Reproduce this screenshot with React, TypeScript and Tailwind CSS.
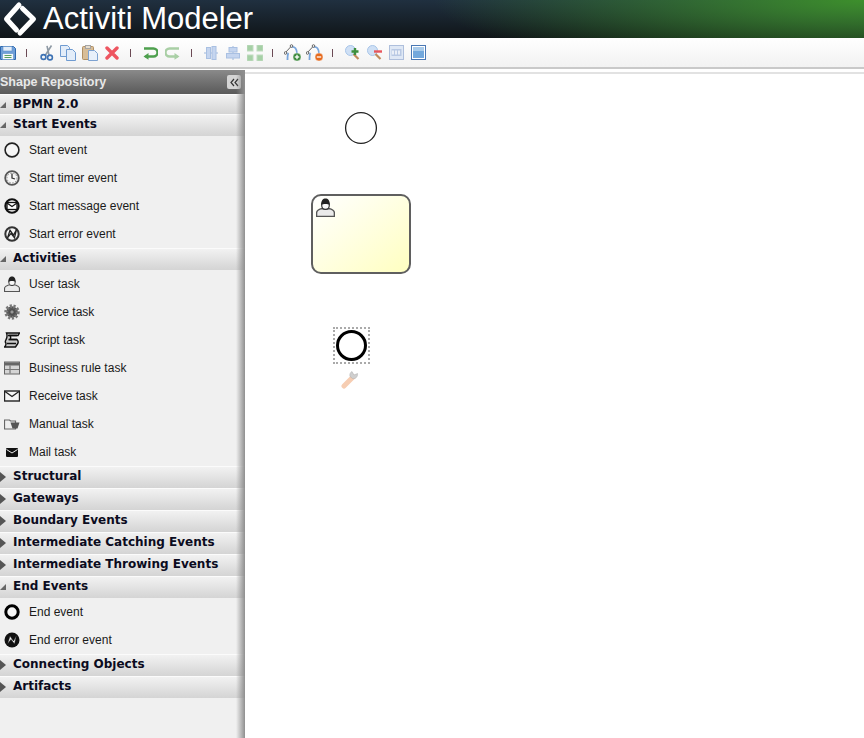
import * as React from "react";

type Icon = () => React.ReactElement;

const Svg = ({ size = 20, box = 20, children }: { size?: number; box?: number; children: React.ReactNode }) => (
  <svg width={size} height={size} viewBox={`0 0 ${box} ${box}`} fill="none" className="block shrink-0">
    {children}
  </svg>
);

// Toolbar icons
const SaveIcon: Icon = () => (
  <Svg size={16} box={16}>
    <path d="M.5 1.500h13l2 2v11H.5z" fill="#6f9fd8" stroke="#2d68ae" />
    <rect x="3" y="1.500" width="9" height="4.500" fill="#e4eef9" stroke="#5e8fc8" strokeWidth=".6" />
    <rect x="2.500" y="8.500" width="11" height="6" fill="#f4f8fb" stroke="#5e8fc8" strokeWidth=".6" />
    <path d="M4.500 10.500h7M4.500 12.500h7" stroke="#58a05c" strokeWidth="1.200" />
  </Svg>
);
const CutIcon: Icon = () => (
  <Svg size={16} box={16}>
    <path d="M11.500.5 5.500 10M7 .8 9 10" stroke="#8f9aa5" strokeWidth="1.600" />
    <circle cx="3.500" cy="12" r="2.400" stroke="#3d72b4" strokeWidth="1.600" />
    <circle cx="10" cy="12.500" r="2.400" stroke="#3d72b4" strokeWidth="1.600" />
  </Svg>
);
const CopyIcon: Icon = () => (
  <Svg size={16} box={16}>
    <path d="M.5.5h7l2 2v9H.5z" fill="#e3edf9" stroke="#6f9bd1" />
    <path d="M6.500 4.500h6l3 3v8h-9z" fill="#e3edf9" stroke="#6f9bd1" />
  </Svg>
);
const PasteIcon: Icon = () => (
  <Svg size={16} box={16}>
    <rect x=".5" y="1.500" width="11" height="13" rx="1" fill="#d8bd97" stroke="#b08f63" />
    <rect x="3.500" y=".5" width="5" height="3" fill="#e7ddcd" stroke="#a5a5a5" />
    <path d="M6.500 5.500h6l3 3v7h-9z" fill="#e8f0fa" stroke="#7da2d1" />
  </Svg>
);
const DeleteIcon: Icon = () => (
  <Svg size={14} box={14}>
    <path d="M2 2 12 12M12 2 2 12" stroke="#ee5560" strokeWidth="3.400" strokeLinecap="round" />
  </Svg>
);
const UndoIcon = ({ light = false }: { light?: boolean }) => {
  const c = light ? "#a9cfa5" : "#4ea04e";
  return (
    <Svg size={15} box={15}>
      <g transform={light ? "matrix(-1 0 0 1 15 0)" : undefined}>
        <path d="M1 3.500h9.500a3.500 3.500 0 0 1 0 8H2.500" stroke={c} strokeWidth="2.400" />
        <path d="M5.500 8 .5 11.500l5 3.300z" fill={c} />
      </g>
    </Svg>
  );
};
const AlignV: Icon = () => (
  <Svg size={14} box={14}>
    <path d="M0 7h14" stroke="#9cb6dc" />
    <rect x="2.500" y="1.500" width="4" height="11" fill="#c5d5ef" stroke="#a9c0e2" />
    <rect x="8" y=".5" width="4" height="13" fill="#c5d5ef" stroke="#a9c0e2" />
  </Svg>
);
const AlignH: Icon = () => (
  <Svg size={14} box={14}>
    <path d="M7 0v14" stroke="#9cb6dc" />
    <rect x="3" y="1.500" width="8" height="4.500" fill="#c5d5ef" stroke="#a9c0e2" />
    <rect x=".5" y="7.500" width="13" height="4.500" fill="#c5d5ef" stroke="#a9c0e2" />
  </Svg>
);
const Group: Icon = () => (
  <Svg size={16} box={16}>
    {[
      [0, 0],
      [10, 0],
      [0, 10],
      [10, 10],
    ].map(([x, y]) => (
      <rect key={`${x}-${y}`} x={x} y={y} width="6" height="6" fill="#a6d0a6" stroke="#c0dcc0" />
    ))}
  </Svg>
);
const DockerIcon = ({ color, plus }: { color: string; plus?: boolean }) => (
  <Svg size={18} box={18}>
    <path d="M1 9 7.500 2" stroke="#666" />
    <path d="M7 3c4-1 6 2 6 7M4.500 9c-1 1-1 4-1 7" stroke="#7aa6dc" strokeWidth="1.800" />
    <circle cx="1.500" cy="9" r="1.300" fill="#fff" stroke="#666" />
    <circle cx="7.500" cy="2" r="1.300" fill="#fff" stroke="#666" />
    <circle cx="13" cy="13" r="4" fill={color} stroke="#fff" strokeWidth=".4" />
    <path d="M10.800 13h4.400" stroke="#fff" strokeWidth="1.300" />
    {plus && <path d="M13 10.800v4.400" stroke="#fff" strokeWidth="1.300" />}
  </Svg>
);
const ZoomIcon = ({ plus }: { plus: boolean }) => (
  <Svg size={15} box={15}>
    <circle cx="5.500" cy="5.500" r="5" fill="#cfe0f5" stroke="#a8c5e8" />
    <path d="m8.500 9 5 5" stroke="#c08a5b" strokeWidth="2.200" />
    {plus ? (
      <path d="M10 3v7M6.500 6.500h7" stroke="#3d8f3d" strokeWidth="2.400" />
    ) : (
      <path d="M7 6.500h8" stroke="#e8555c" strokeWidth="2.400" />
    )}
  </Svg>
);
const Zoom100: Icon = () => (
  <Svg size={15} box={15}>
    <rect x=".5" y=".5" width="14" height="14" fill="#dfe8f5" stroke="#aebfdc" />
    <rect x="2.500" y="4" width="10" height="7" fill="#b9c9e4" />
    <path d="M4 5.500v4M7 5.500v4M10 5.500v4" stroke="#fff" strokeWidth="1.400" />
  </Svg>
);
const ZoomFit: Icon = () => (
  <Svg size={15} box={15}>
    <rect x=".5" y=".5" width="14" height="14" fill="#fff" stroke="#4a78b4" />
    <rect x="2" y="2" width="11" height="11" fill="#73a8dc" />
    <rect x="2" y="2" width="11" height="4" fill="#a9cbea" />
  </Svg>
);
const Sep = () => <div className="h-[8px] w-px bg-[#6b4a55]" />;

// Repository icons
const Ring = ({ w = 1.2, stroke = "#222", children }: { w?: number; stroke?: string; children?: React.ReactNode }) => (
  <Svg size={16} box={16}>
    <circle cx="8" cy="8" r={8 - w / 2 - 0.3} fill="#f6f6f6" stroke={stroke} strokeWidth={w} />
    {children}
  </Svg>
);
const StartEvent: Icon = () => <Ring w={1.6} />;
const TimerEvent: Icon = () => (
  <Ring w={1.800} stroke="#555">
    <circle cx="8" cy="8" r="5" stroke="#888" strokeDasharray="1.500 1.500" />
    <path d="M8 3.500V8l3 1" stroke="#333" strokeWidth="1.300" />
  </Ring>
);
const MessageEvent: Icon = () => (
  <Ring w={2} stroke="#111">
    <rect x="3" y="4.500" width="10" height="7" fill="#fff" stroke="#111" strokeWidth="1.300" />
    <path d="m3 5 5 3.500L13 5" stroke="#111" strokeWidth="1.200" />
  </Ring>
);
const ErrorEvent: Icon = () => (
  <Ring w={2} stroke="#333">
    <path d="M3.500 12 6 4l3.500 5L12.500 3.500 10.500 12 7 7.500z" fill="#bbb" stroke="#222" strokeWidth="1.200" />
  </Ring>
);
const UserIcon = ({ size = 16 }: { size?: number }) => (
  <Svg size={size} box={16}>
    <path d="M.5 15.500v-3c0-2 2.500-3 4-3.500h7c1.500.5 4 1.500 4 3.500v3z" fill="#eaeaea" stroke="#555" strokeWidth="1.200" />
    <path d="M4.800 6a3.200 3.400 0 1 1 6.400 0c0 1.800-1 3.500-3.200 3.500S4.800 7.800 4.800 6z" fill="#f8f8f8" stroke="#333" />
    <path d="M4.400 6C4.200 2 6 .5 8 .5s3.800 1.500 3.600 5.500C10 4.800 6 4.800 4.400 6z" fill="#222" />
  </Svg>
);
const ServiceIcon: Icon = () => (
  <Svg size={16} box={16}>
    <circle cx="8" cy="8" r="5.800" fill="#555" stroke="#777" strokeWidth="3.800" strokeDasharray="2 1.500" />
    <circle cx="8" cy="8" r="2.200" fill="#999" stroke="#444" />
  </Svg>
);
const ScriptIcon: Icon = () => (
  <Svg size={16} box={16}>
    <path
      d="M2.500 1h13l-1.500 2.500H6c1 1.500 1 2.500 0 4h7c1.500 1.500 1.500 3 .5 4.500l-2 3H.5c1.500-1.500 2.200-3 .8-5C1 7.500 4.500 6.500 2.500 1z"
      fill="#ccc"
      stroke="#111"
      strokeWidth="1.400"
    />
    <path d="M4 3.500h9M4.500 7.500h8.500M3 11.500h9" stroke="#111" strokeWidth="1.400" />
  </Svg>
);
const BusinessIcon: Icon = () => (
  <Svg size={16} box={16}>
    <rect x=".5" y="2" width="15" height="12" fill="#d5d5d5" stroke="#666" />
    <rect x="1" y="2.500" width="14" height="3" fill="#666" />
    <path d="M1 9.500h14M6 5.500v8" stroke="#777" strokeWidth="1.200" />
  </Svg>
);
const ReceiveIcon: Icon = () => (
  <Svg size={16} box={16}>
    <rect x=".5" y="3" width="15" height="10" fill="#f6f6f6" stroke="#222" strokeWidth="1.400" />
    <path d="m1 3.500 7 5 7-5" stroke="#222" strokeWidth="1.400" />
  </Svg>
);
const ManualIcon: Icon = () => (
  <Svg size={16} box={16}>
    <path d="M.5 4h5l1 1h5v8H.5z" fill="#eee" stroke="#666" strokeWidth="1.200" />
    <path d="M6.500 6.500h9l-2 6h-5z" fill="#555" />
  </Svg>
);
const MailIcon: Icon = () => (
  <Svg size={16} box={16}>
    <rect x="2" y="4" width="12" height="9" rx="1" fill="#111" />
    <path d="m2.500 5.500 5.500 3.500 5.500-3.500" stroke="#eee" />
  </Svg>
);
const EndEvent: Icon = () => <Ring w={3} stroke="#000" />;
const EndError: Icon = () => (
  <Svg size={16} box={16}>
    <circle cx="8" cy="8" r="7.500" fill="#111" />
    <path d="M3.500 12 6 4l3.500 5L12.500 3.500 10.500 12 7 7.500z" fill="#f4f4f4" stroke="#111" strokeWidth=".5" />
  </Svg>
);

type Section = { title: string; open?: boolean; items?: [string, Icon][] };

const sections: Section[] = [
  {
    title: "Start Events",
    open: true,
    items: [
      ["Start event", StartEvent],
      ["Start timer event", TimerEvent],
      ["Start message event", MessageEvent],
      ["Start error event", ErrorEvent],
    ],
  },
  {
    title: "Activities",
    open: true,
    items: [
      ["User task", () => <UserIcon />],
      ["Service task", ServiceIcon],
      ["Script task", ScriptIcon],
      ["Business rule task", BusinessIcon],
      ["Receive task", ReceiveIcon],
      ["Manual task", ManualIcon],
      ["Mail task", MailIcon],
    ],
  },
  { title: "Structural" },
  { title: "Gateways" },
  { title: "Boundary Events" },
  { title: "Intermediate Catching Events" },
  { title: "Intermediate Throwing Events" },
  {
    title: "End Events",
    open: true,
    items: [
      ["End event", EndEvent],
      ["End error event", EndError],
    ],
  },
  { title: "Connecting Objects" },
  { title: "Artifacts" },
];

const SectionHeader = ({ title, open, first }: { title: string; open?: boolean; first?: boolean }) => (
  <div
    className={`relative border-t border-[#fbfbfb] bg-gradient-to-b from-[#f2f2f2] to-[#d4d4d4] pl-[13px] font-['DejaVu_Sans',sans-serif] text-[12px] leading-[18px] font-bold text-[#0b0b20] ${
      first ? "h-[20px]" : "h-[22px]"
    }`}
  >
    {open ? (
      <span className="absolute left-0 top-[7px] border-b-[6px] border-l-[6px] border-b-[#666] border-l-transparent" />
    ) : (
      <span className="absolute left-0 top-[5px] border-y-[5px] border-l-[6px] border-y-transparent border-l-[#555]" />
    )}
    {title}
  </div>
);

export default function App() {
  return (
    <div className="flex h-[738px] w-[864px] flex-col overflow-hidden bg-white font-['Liberation_Sans',sans-serif]">
      {/* Title bar */}
      <div className="flex h-[38px] items-center bg-[radial-gradient(ellipse_430px_75px_at_100%_0%,#3d8f2c,transparent),linear-gradient(to_bottom,#203040,#101518)]">
        <svg width="40" height="38" viewBox="0 0 40 38" className="block shrink-0" fill="none">
          <path d="M19 5 6.500 19 16.500 30" stroke="#fff" strokeWidth="5" strokeLinejoin="round" strokeLinecap="round" />
          <path d="M22.500 8.500 33.500 19 20 33" stroke="#fff" strokeWidth="5" strokeLinejoin="round" strokeLinecap="round" />
        </svg>
        <span className="ml-[3px] text-[31px] leading-[38px] text-white">Activiti Modeler</span>
      </div>

      {/* Toolbar */}
      <div className="flex h-[31px] items-center border-b-[2px] border-[#c9c9c9] bg-gradient-to-b from-white to-[#f2f2f2]">
        <div className="flex w-[26px] justify-start"><SaveIcon /></div>
        <Sep />
        <div className="ml-[13px]"><CutIcon /></div>
        <div className="ml-[4px]"><CopyIcon /></div>
        <div className="ml-[6px]"><PasteIcon /></div>
        <div className="ml-[7px]"><DeleteIcon /></div>
        <div className="ml-[11px]"><Sep /></div>
        <div className="ml-[12px]"><UndoIcon /></div>
        <div className="ml-[7px]"><UndoIcon light /></div>
        <div className="ml-[11px]"><Sep /></div>
        <div className="ml-[12px]"><AlignV /></div>
        <div className="ml-[8px]"><AlignH /></div>
        <div className="ml-[7px]"><Group /></div>
        <div className="ml-[9px]"><Sep /></div>
        <div className="ml-[11px]"><DockerIcon color="#3c8a3c" plus /></div>
        <div className="ml-[4px]"><DockerIcon color="#e56a1e" /></div>
        <div className="ml-[8px]"><Sep /></div>
        <div className="ml-[12px]"><ZoomIcon plus /></div>
        <div className="ml-[7px]"><ZoomIcon plus={false} /></div>
        <div className="ml-[7px]"><Zoom100 /></div>
        <div className="ml-[7px]"><ZoomFit /></div>
      </div>

      <div className="mt-px flex min-h-0 flex-1">
        {/* Shape repository */}
        <div className="relative w-[245px] shrink-0 bg-[#f0f0f0]">
          <div className="flex h-[24px] items-center justify-between bg-gradient-to-b from-[#8a8a8a] to-[#5a5a5a] pr-[4px] text-[12.5px] font-bold text-[#e8e8e8]">
            <span>Shape Repository</span>
            <span className="flex h-[14px] w-[14px] items-center justify-center rounded-[2px] bg-[#d4d4d4]">
              <svg width="9" height="9" viewBox="0 0 9 9" fill="none" className="block">
                <path d="M4 1 1 4.500 4 8M8 1 5 4.500 8 8" stroke="#333" strokeWidth="1.200" />
              </svg>
            </span>
          </div>
          <SectionHeader title="BPMN 2.0" open first />
          {sections.map((s) => (
            <div key={s.title}>
              <SectionHeader title={s.title} open={s.open} />
              {s.items?.map(([label, Ic]) => (
                <div key={label} className="flex h-[28px] items-center pl-[4px] text-[12px] text-[#1a1a1a]">
                  <div className="blur-[0.5px]">
                    <Ic />
                  </div>
                  <span className="ml-[9px]">{label}</span>
                </div>
              ))}
            </div>
          ))}
          <div className="pointer-events-none absolute inset-y-0 right-0 w-[9px] bg-gradient-to-r from-transparent to-[#8f8f8f]" />
        </div>

        {/* Canvas */}
        <div className="relative flex-1 bg-white">
          <div className="mt-[2px] h-[2px] bg-[#e2e2e2]" />
          <svg width="34" height="34" viewBox="0 0 34 34" fill="none" className="absolute left-[99px] top-[41px] block">
            <circle cx="17" cy="17" r="15.400" fill="#fff" stroke="#222" strokeWidth="1.300" />
          </svg>
          <div className="absolute left-[66px] top-[124px] h-[80px] w-[100px] rounded-[10px] border-2 border-[#5f5f5f] bg-gradient-to-br from-white to-[#ffffc0]">
            <div className="ml-[3px] mt-[2px]"><UserIcon size={19} /></div>
          </div>
          <div className="absolute left-[88px] top-[257px] flex h-[37px] w-[37px] items-center justify-center border-2 border-dotted border-[#aaa]">
            <div className="h-[31px] w-[31px] shrink-0 rounded-full border-[3.5px] border-black" />
          </div>
          <svg width="20" height="20" viewBox="0 0 20 20" fill="none" className="absolute left-[96px] top-[299px] block">
            <path d="M3 17 12 8" stroke="#f6cdb2" strokeWidth="5" strokeLinecap="round" />
            <path d="M11 2.500l2 3.500 3.500-1.500c.5 3-2 6-5 5l-2.500-2c-.5-2 0-4 2-5z" fill="#cfcfcf" stroke="#aaa" strokeWidth=".5" />
          </svg>
        </div>
      </div>
    </div>
  );
}
